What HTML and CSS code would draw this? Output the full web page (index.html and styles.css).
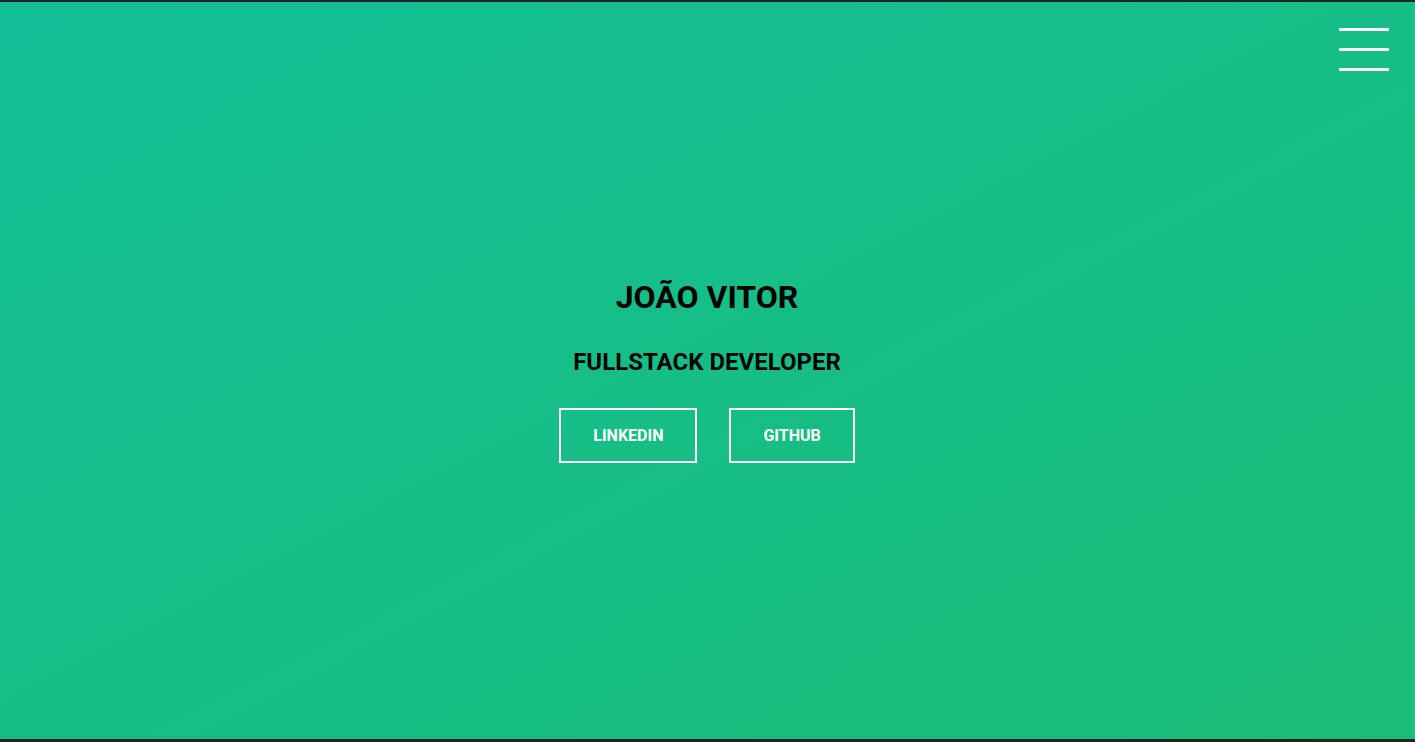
FILE: index.html
```html
<!DOCTYPE html>
<html lang="pt-BR">
<head>
<meta charset="utf-8">
<title>João Vitor</title>
<link rel="stylesheet" href="styles.css">
</head>
<body>
<div class="frame">
  <header class="hero">
    <button class="menu" aria-label="Menu">
      <span class="bar"></span>
      <span class="bar"></span>
      <span class="bar"></span>
    </button>
    <div class="intro">
      <h1 class="name">JOÃO VITOR</h1>
      <h2 class="role">FULLSTACK DEVELOPER</h2>
      <div class="links">
        <a class="btn" href="#">LINKEDIN</a>
        <a class="btn" href="#">GITHUB</a>
      </div>
    </div>
  </header>
</div>
</body>
</html>
```

FILE: styles.css
```css
html, body {
  margin: 0;
  padding: 0;
  height: 100%;
}
body {
  background: #222;
  font-family: Roboto, "Liberation Sans", sans-serif;
  overflow: hidden;
}
.frame {
  height: 100%;
  box-sizing: border-box;
  padding: 2px 0 3px 0;
  display: flex;
}
.hero {
  position: relative;
  flex: 1;
  display: flex;
  align-items: center;
  justify-content: center;
  background: linear-gradient(to bottom right, #13bf97, #19bd76);
  border-right: 1px solid #22c483;
}
.menu {
  position: absolute;
  top: 26px;
  right: 25px;
  width: 50px;
  padding: 0;
  border: 0;
  background: transparent;
  display: flex;
  flex-direction: column;
  gap: 17px;
}
.bar {
  display: block;
  height: 3px;
  background: #fff;
}
.intro {
  display: flex;
  flex-direction: column;
  align-items: center;
}
.name {
  margin: 0;
  font-size: 32px;
  font-weight: 700;
  color: #000;
  line-height: 38px;
}
.role {
  margin: 32px 0 0 0;
  font-size: 24px;
  font-weight: 700;
  color: #000;
  line-height: 28px;
}
.links {
  margin-top: 32px;
  display: flex;
  gap: 32px;
}
.btn {
  display: block;
  border: 2px solid #fff;
  padding: 17px 32px;
  color: #fff;
  text-decoration: none;
  font-size: 16px;
  font-weight: 700;
  line-height: 17px;
}
```
